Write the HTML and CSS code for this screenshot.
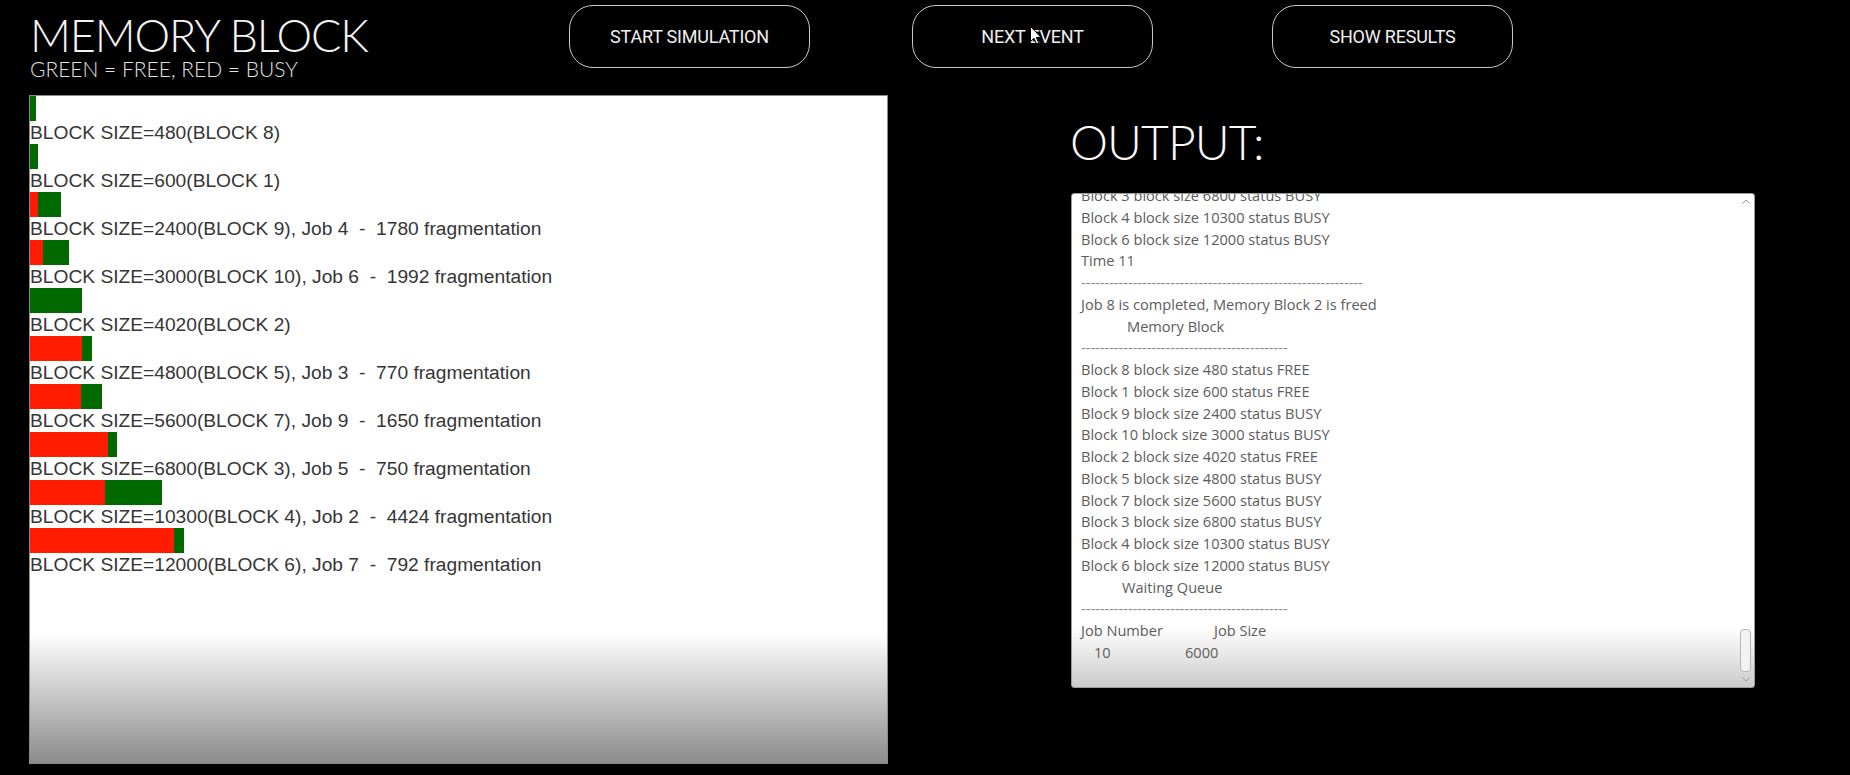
FILE: index.html
```html
<!DOCTYPE html>
<html lang="en">
<head>
<meta charset="utf-8">
<title>Memory Block</title>
<link rel="stylesheet" href="styles.css">
</head>
<body>
<div class="app">
  <header class="top">
    <div class="brand">
      <h1 class="title">MEMORY BLOCK</h1>
      <div class="subtitle">GREEN = FREE, RED = BUSY</div>
    </div>
    <nav class="actions">
      <button class="btn btn-start">START SIMULATION</button>
      <button class="btn btn-next">NEXT EVENT
        <svg class="cursor" width="12" height="19" viewBox="0 0 12 19"><path d="M0.5 0.5 L0.5 15.5 L4 12.2 L6.6 18 L8.8 17 L6.3 11.4 L11 11.4 Z" fill="#fff" stroke="#000" stroke-width="1" stroke-linejoin="round"/></svg>
      </button>
      <button class="btn btn-results">SHOW RESULTS</button>
    </nav>
  </header>
  <main class="main">
    <section class="memory">
      <div class="row"><div class="bar" style="width:6.2px"></div><div class="label">BLOCK SIZE=480(BLOCK 8)</div></div>
      <div class="row"><div class="bar" style="width:7.7px"></div><div class="label">BLOCK SIZE=600(BLOCK 1)</div></div>
      <div class="row"><div class="bar" style="width:30.8px"><div class="used" style="width:7.9px"></div></div><div class="label">BLOCK SIZE=2400(BLOCK 9), Job 4  -  1780 fragmentation</div></div>
      <div class="row"><div class="bar" style="width:38.5px"><div class="used" style="width:12.9px"></div></div><div class="label">BLOCK SIZE=3000(BLOCK 10), Job 6  -  1992 fragmentation</div></div>
      <div class="row"><div class="bar" style="width:51.5px"></div><div class="label">BLOCK SIZE=4020(BLOCK 2)</div></div>
      <div class="row"><div class="bar" style="width:61.5px"><div class="used" style="width:51.7px"></div></div><div class="label">BLOCK SIZE=4800(BLOCK 5), Job 3  -  770 fragmentation</div></div>
      <div class="row"><div class="bar" style="width:71.8px"><div class="used" style="width:50.6px"></div></div><div class="label">BLOCK SIZE=5600(BLOCK 7), Job 9  -  1650 fragmentation</div></div>
      <div class="row"><div class="bar" style="width:87.2px"><div class="used" style="width:77.6px"></div></div><div class="label">BLOCK SIZE=6800(BLOCK 3), Job 5  -  750 fragmentation</div></div>
      <div class="row"><div class="bar" style="width:132px"><div class="used" style="width:75.3px"></div></div><div class="label">BLOCK SIZE=10300(BLOCK 4), Job 2  -  4424 fragmentation</div></div>
      <div class="row"><div class="bar" style="width:153.8px"><div class="used" style="width:143.7px"></div></div><div class="label">BLOCK SIZE=12000(BLOCK 6), Job 7  -  792 fragmentation</div></div>
    </section>
    <section class="output-col">
      <h2 class="output-title">OUTPUT:</h2>
      <div class="output-box">
        <div class="log">
          <div class="line">Block 3 block size 6800 status BUSY</div>
          <div class="line">Block 4 block size 10300 status BUSY</div>
          <div class="line">Block 6 block size 12000 status BUSY</div>
          <div class="line">Time 11</div>
          <div class="line dash dash-long">------------------------------------------------------------</div>
          <div class="line">Job 8 is completed, Memory Block 2 is freed</div>
          <div class="line ind-a">Memory Block</div>
          <div class="line dash dash-short">--------------------------------------------</div>
          <div class="line">Block 8 block size 480 status FREE</div>
          <div class="line">Block 1 block size 600 status FREE</div>
          <div class="line">Block 9 block size 2400 status BUSY</div>
          <div class="line">Block 10 block size 3000 status BUSY</div>
          <div class="line">Block 2 block size 4020 status FREE</div>
          <div class="line">Block 5 block size 4800 status BUSY</div>
          <div class="line">Block 7 block size 5600 status BUSY</div>
          <div class="line">Block 3 block size 6800 status BUSY</div>
          <div class="line">Block 4 block size 10300 status BUSY</div>
          <div class="line">Block 6 block size 12000 status BUSY</div>
          <div class="line ind-b">Waiting Queue</div>
          <div class="line dash dash-short">--------------------------------------------</div>
          <div class="line"><span class="col-a">Job Number</span><span>Job Size</span></div>
          <div class="line"><span class="col-a col-num">10</span><span class="col-size">6000</span></div>
        </div>
        <div class="scrollbar">
          <div class="arrow"><svg width="8" height="5" viewBox="0 0 8 5"><path d="M0.5 4.5 L4 1 L7.5 4.5" fill="none" stroke="#9a9a9a" stroke-width="1"/></svg></div>
          <div class="track"><div class="thumb"></div></div>
          <div class="arrow"><svg width="8" height="5" viewBox="0 0 8 5"><path d="M0.5 0.5 L4 4 L7.5 0.5" fill="none" stroke="#9a9a9a" stroke-width="1"/></svg></div>
        </div>
      </div>
    </section>
  </main>
</div>
</body>
</html>
```

FILE: styles.css
```css
* { box-sizing: border-box; }

html, body {
  margin: 0;
  padding: 0;
  background: #000;
}

body {
  width: 1850px;
  height: 775px;
  overflow: hidden;
}

.app {
  display: flex;
  flex-direction: column;
  width: 1850px;
  height: 775px;
}

/* ---------- top bar ---------- */
.top {
  display: flex;
  height: 95px;
  padding-left: 30px;
}

.brand {
  width: 539px;
  padding-top: 13px;
}

.title {
  margin: 0;
  height: 44px;
  font-family: Lato, "Open Sans", sans-serif;
  font-weight: 300;
  font-size: 45px;
  line-height: 44px;
  letter-spacing: -1.1px;
  color: #f4f4f4;
  white-space: nowrap;
}

.subtitle {
  margin-top: 2px;
  font-family: Lato, "Open Sans", sans-serif;
  font-weight: 300;
  font-size: 21px;
  line-height: 20px;
  color: #e0e0e0;
  white-space: nowrap;
}

.actions {
  display: flex;
  align-items: flex-start;
  padding-top: 5px;
}

.btn {
  position: relative;
  width: 241px;
  height: 63px;
  padding: 0;
  border: 1.5px solid #c9c9c9;
  border-radius: 24px;
  background: #000;
  color: #f0f0f0;
  font-family: Roboto, "Liberation Sans", sans-serif;
  font-size: 18px;
  letter-spacing: -0.2px;
}

.btn-start { margin-right: 102px; }
.btn-next { margin-right: 119px; }

.cursor {
  position: absolute;
  left: 117px;
  top: 20px;
}

/* ---------- main ---------- */
.main {
  display: flex;
  align-items: flex-start;
}

.memory {
  display: flex;
  flex-direction: column;
  width: 859px;
  height: 669px;
  margin-left: 29px;
  border: 1px solid #8a8a8a;
  background: linear-gradient(to bottom, #fff 0%, #fff 80.5%, #8b8b8b 100%);
  overflow: hidden;
}

.row {
  display: flex;
  flex-direction: column;
}

.bar {
  display: flex;
  height: 25px;
  background: #006a00;
}

.used {
  height: 100%;
  background: #ff1c00;
}

.label {
  height: 23px;
  font-family: "Liberation Sans", Arial, sans-serif;
  font-size: 19.2px;
  line-height: 23px;
  color: #353535;
  white-space: pre;
}

/* ---------- output ---------- */
.output-col {
  display: flex;
  flex-direction: column;
  margin-left: 183px;
}

.output-title {
  margin: 23px 0 0 -1px;
  height: 48px;
  font-family: Lato, "Open Sans", sans-serif;
  font-weight: 300;
  font-size: 48px;
  line-height: 48px;
  letter-spacing: -0.9px;
  color: #fafafa;
}

.output-box {
  display: flex;
  width: 684px;
  height: 495px;
  margin-top: 27px;
  border: 1px solid #9c9c9c;
  border-radius: 3px;
  background: linear-gradient(to bottom, #fff 0%, #fff 88%, #cbcbcb 100%);
  overflow: hidden;
}

.log {
  flex: 1;
  margin-top: -9px;
  padding-left: 9px;
  font-family: "Open Sans", "Noto Sans", sans-serif;
  font-size: 14.6px;
  color: #5c5c5c;
}

.line {
  height: 21.75px;
  line-height: 21.75px;
  white-space: nowrap;
}

.dash {
  overflow: hidden;
  color: #8a8a8a;
}

.dash-long { width: 282px; }
.dash-short { width: 207px; }

.ind-a { padding-left: 46px; }
.ind-b { padding-left: 41px; }

.col-a {
  display: inline-block;
  width: 133px;
}

.col-num { padding-left: 13px; width: 104px; }

/* ---------- scrollbar ---------- */
.scrollbar {
  display: flex;
  flex-direction: column;
  width: 17px;
  flex-shrink: 0;
}

.arrow {
  display: flex;
  align-items: center;
  justify-content: center;
  height: 15px;
}

.track {
  flex: 1;
  display: flex;
  flex-direction: column;
  justify-content: flex-end;
  align-items: center;
}

.thumb {
  width: 11px;
  height: 43px;
  border: 1px solid #b5b5b5;
  border-radius: 4px;
  background: #f2f2f2;
}
```
